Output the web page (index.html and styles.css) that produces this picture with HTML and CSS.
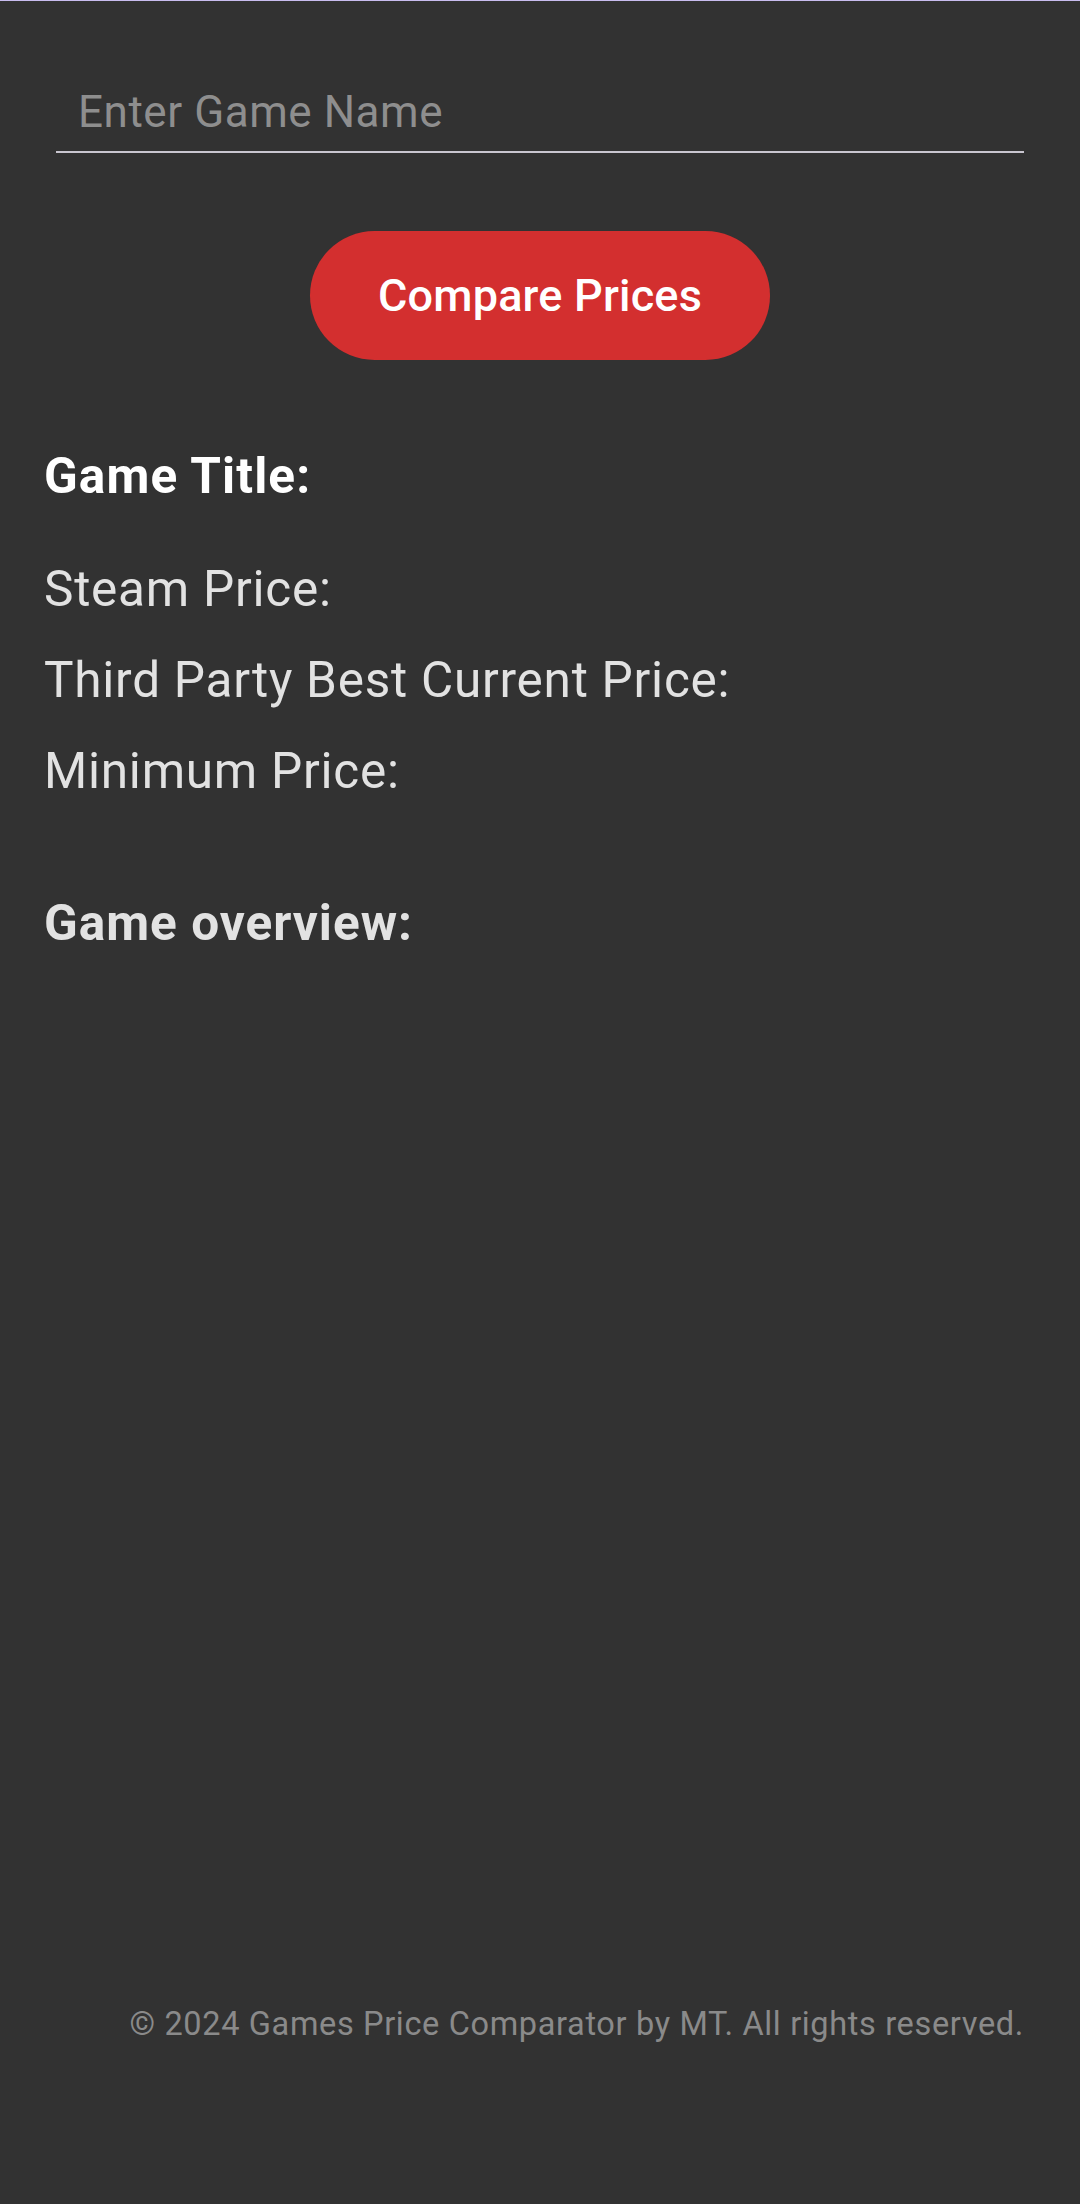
FILE: index.html
```html
<!DOCTYPE html>
<html lang="en">
<head>
<meta charset="utf-8">
<title>Games Price Comparator</title>
<link rel="stylesheet" href="styles.css">
</head>
<body>
<div class="app">
  <main class="main">
    <div class="search">
      <input class="search-input" type="text" placeholder="Enter Game Name">
    </div>
    <div class="actions">
      <button class="compare-btn" type="button">Compare Prices</button>
    </div>
    <section class="results">
      <h2 class="game-title">Game Title:</h2>
      <p class="price-row">Steam Price:</p>
      <p class="price-row">Third Party Best Current Price:</p>
      <p class="price-row">Minimum Price:</p>
      <h3 class="overview">Game overview:</h3>
    </section>
  </main>
  <footer class="footer">© 2024 Games Price Comparator by MT. All rights reserved.</footer>
</div>
</body>
</html>
```
FILE: styles.css
```css
html, body {
  margin: 0;
  padding: 0;
  background: #323232;
}

body {
  font-family: Roboto, "Noto Sans", "Liberation Sans", sans-serif;
}

.app {
  box-sizing: border-box;
  min-height: 2204px;
  border-top: 1px solid #c9bdf0;
  display: flex;
  flex-direction: column;
}

.main {
  flex: 1;
}

.search {
  margin: 82px 56px 0;
}

.search-input {
  display: block;
  box-sizing: border-box;
  width: 100%;
  height: 70px;
  margin: 0;
  padding: 0 0 10px 22px;
  border: none;
  border-bottom: 2px solid #c9c6d0;
  background: transparent;
  font-family: Roboto, "Noto Sans", sans-serif;
  font-size: 44px;
  letter-spacing: 0.55px;
  line-height: 60px;
  color: #e0e0e0;
  outline: none;
}

.search-input::placeholder {
  color: #8e8e8e;
}

.actions {
  display: flex;
  justify-content: center;
  margin-top: 78px;
}

.compare-btn {
  width: 460px;
  height: 129px;
  border: none;
  border-radius: 65px;
  background: #d32f2f;
  color: #ffffff;
  font-family: Roboto, "Noto Sans", sans-serif;
  font-size: 45px;
  font-weight: 500;
  letter-spacing: 0.2px;
  padding: 0;
}

.results {
  padding: 0 44px;
  margin-top: 71px;
}

.game-title {
  margin: 0 0 22px;
  font-size: 49.5px;
  font-weight: 700;
  letter-spacing: 1.1px;
  line-height: 91px;
  color: #ffffff;
}

.price-row {
  margin: 0;
  font-size: 49.5px;
  font-weight: 400;
  letter-spacing: 0.75px;
  line-height: 91px;
  color: #e2e2e2;
}

.overview {
  margin: 61px 0 0;
  font-size: 49.5px;
  font-weight: 700;
  letter-spacing: 1px;
  line-height: 91px;
  color: #e2e2e2;
}

.footer {
  text-align: right;
  padding: 0 56px 160px;
  font-size: 32.5px;
  letter-spacing: 0.65px;
  line-height: 40px;
  color: #8a8a8a;
}
```
